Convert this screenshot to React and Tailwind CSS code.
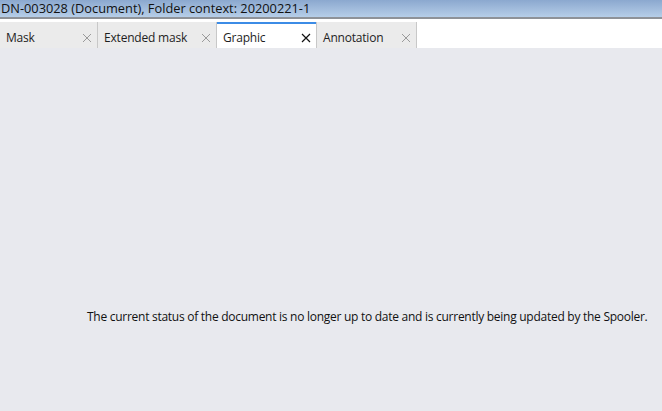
import React from "react";

function Tab({ label, width, active }) {
  return (
    <div
      className={`relative flex items-center h-[26px] pt-[5px] border-r border-[#c8c8c8] ${active ? "bg-white" : "bg-[#ebebeb]"}`}
      style={{ width }}
    >
      {active && <div className="absolute left-0 right-0 top-0 h-[2px] bg-[#3c8ce6]" />}
      <span className="pl-[6px] text-[12px] tracking-[-0.2px] text-[#1e1e1e] flex-1">{label}</span>
      <svg width="10" height="10" viewBox="0 0 10 10" className="mr-[5px]">
        <path d="M1 1 L9 9 M9 1 L1 9" stroke={active ? "#111" : "#9a9a9a"} strokeWidth={active ? 1.2 : 1} />
      </svg>
    </div>
  );
}

export default function App() {
  return (
    <div className="w-[662px] h-[411px] flex flex-col bg-[#e8e9ee] overflow-hidden" style={{ fontFamily: '"Segoe UI", "Open Sans", "Noto Sans", sans-serif' }}>
      <div className="h-[17px] bg-gradient-to-b from-[#8ba8cf] to-[#b6cee8] flex items-center pl-[1px] text-[12.8px] text-[#111] leading-none">
        DN-003028 (Document), Folder context: 20200221-1
      </div>
      <div className="h-[2px] bg-[#8e9298]" />
      <div className="h-[3px] bg-white" />
      <div className="flex bg-white">
        <Tab label="Mask" width={98} />
        <Tab label="Extended mask" width={119} />
        <Tab label="Graphic" width={100} active />
        <Tab label="Annotation" width={100} />
      </div>
      <div className="flex-1 relative">
        <div className="absolute left-[87px] top-[260px] text-[12px] tracking-[-0.27px] text-[#111] whitespace-nowrap">
          The current status of the document is no longer up to date and is currently being updated by the Spooler.
        </div>
      </div>
    </div>
  );
}
